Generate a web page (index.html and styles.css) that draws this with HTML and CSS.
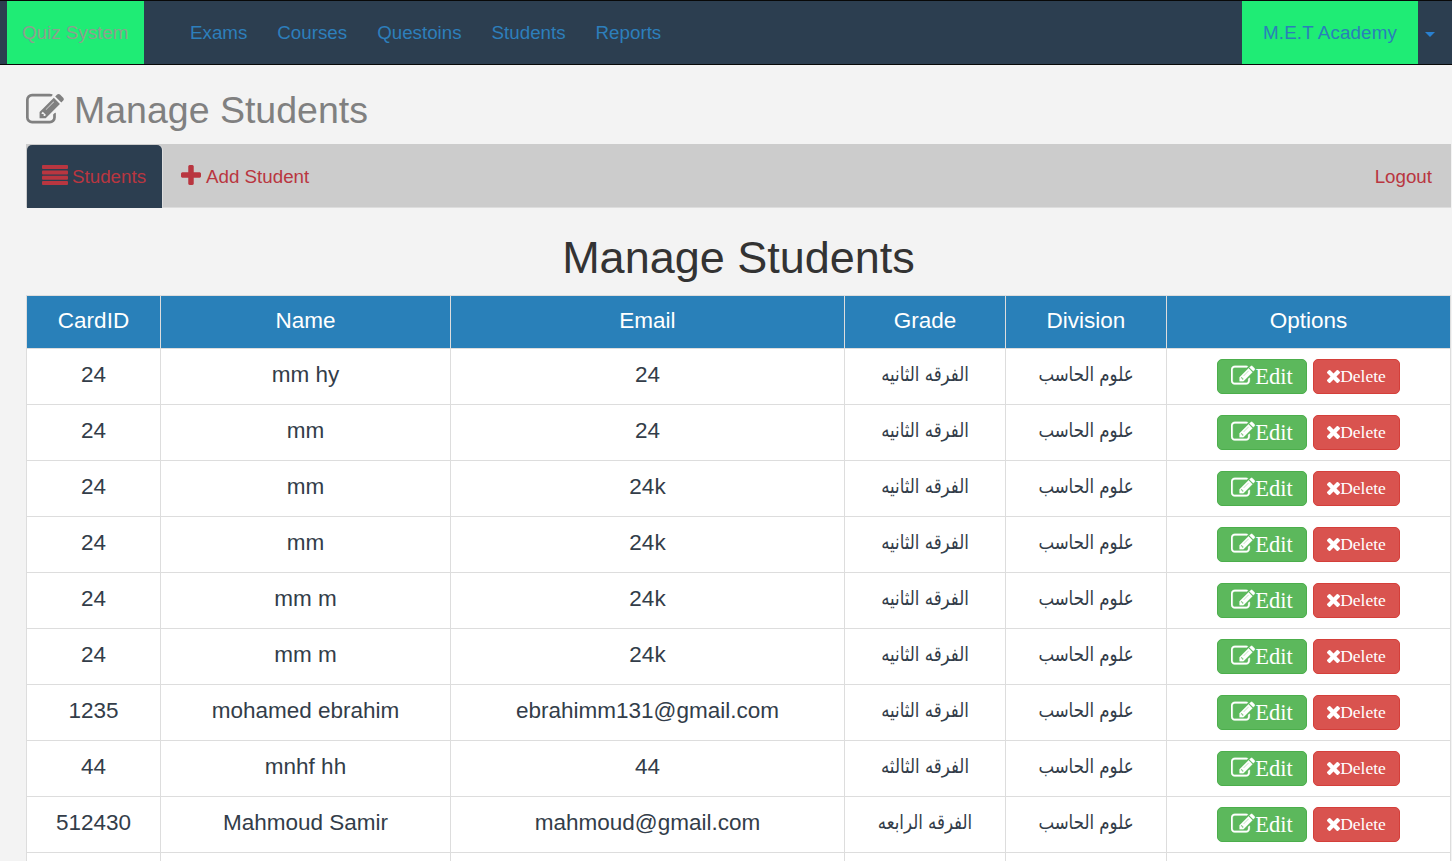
FILE: index.html
```html
<!DOCTYPE html>
<html lang="en">
<head>
<meta charset="utf-8">
<title>Manage Students</title>
<link rel="stylesheet" href="styles.css">
</head>
<body>
<svg class="defs" width="0" height="0">
  <symbol id="edit" viewBox="0 0 1792 1792"><path d="M888 1184l56-56-152-152-56 56v56h96v96h56zM1300 500l-370 370 20 20 370-370zM1408 1058v190q0 119-84.500 203.500t-203.500 84.500h-832q-119 0-203.500-84.500t-84.500-203.500v-832q0-119 84.500-203.500t203.500-84.500h832q63 0 117 25 15 7 18 23 3 17-9 29l-49 49q-14 14-32 8-23-6-45-6h-832q-66 0-113 47t-47 113v832q0 66 47 113t113 47h832q66 0 113-47t47-113v-126q0-13 9-22l64-64q15-15 35-7t20 29zm-96-738l288 288-672 672h-288v-288zm444 132l-92 92-288-288 92-92q28-28 68-28t68 28l152 152q28 28 28 68t-28 68z"/></symbol>
  <symbol id="times" viewBox="302 366 1188 1188"><path d="M1490 1322q0 40-28 68l-136 136q-28 28-68 28t-68-28l-294-294-294 294q-28 28-68 28t-68-28l-136-136q-28-28-28-68t28-68l294-294-294-294q-28-28-28-68t28-68l136-136q28-28 68-28t68 28l294 294 294-294q28-28 68-28t68 28l136 136q28 28 28 68t-28 68l-294 294 294 294q28 28 28 68z"/></symbol>
</svg>
<nav class="navbar">
  <a class="brand">Quiz System</a>
  <div class="links"><a>Exams</a><a>Courses</a><a>Questoins</a><a>Students</a><a>Reports</a></div>
  <a class="account">M.E.T Academy</a>
  <span class="caret"></span>
</nav>
<main class="page">
  <h1 class="page-title"><svg class="title-icon"><use href="#edit"/></svg>Manage Students</h1>
  <div class="tabs">
    <a class="tab active"><svg class="list-icon" viewBox="0 0 26 20"><rect width="26" height="4" rx=".9"/><rect y="5.400" width="26" height="4" rx=".9"/><rect y="10.700" width="26" height="4" rx=".9"/><rect y="16" width="26" height="4" rx=".9"/></svg>Students</a>
    <a class="tab add"><svg class="plus-icon" viewBox="192 128 1408 1408"><path d="M1600 736v192q0 40-28 68t-68 28h-416v416q0 40-28 68t-68 28h-192q-40 0-68-28t-28-68v-416h-416q-40 0-68-28t-28-68v-192q0-40 28-68t68-28h416v-416q0-40 28-68t68-28h192q40 0 68 28t28 68v416h416q40 0 68 28t28 68z"/></svg>Add Student</a>
    <a class="tab logout">Logout</a>
  </div>
  <h2 class="table-title">Manage Students</h2>
  <table class="students">
    <colgroup><col class="c-id"><col class="c-name"><col class="c-email"><col class="c-grade"><col class="c-div"><col class="c-opt"></colgroup>
    <thead><tr><th>CardID</th><th>Name</th><th>Email</th><th>Grade</th><th>Division</th><th>Options</th></tr></thead>
    <tbody id="rows"></tbody>
  </table>
</main>
<script src="rows.js"></script>
</body>
</html>
```
FILE: styles.css
```css
* { box-sizing: border-box; }
body { margin: 0; background: #f3f3f3; font-family: "Liberation Sans", Arial, sans-serif; font-size: 18.75px; color: #333; }
.defs { display: block; }
svg { fill: currentColor; flex: none; }
.navbar { display: flex; height: 65px; padding-left: 7px; background: #2c3e50; border-top: 1px solid #080808; border-bottom: 1px solid #080808; color: #2d7fbc; line-height: 63px; }
.brand { width: 137px; padding-left: 15px; background: #1fec75; color: #8c9f8f; }
.links { display: flex; gap: 30px; margin-left: 46px; }
.account { width: 176px; margin-left: auto; padding-left: 21px; background: #1fec75; color: #2980b9; white-space: nowrap; letter-spacing: .15px; }
.caret { align-self: center; margin: 4px 17px 0 7px; border: 5px solid transparent; border-top-color: #2980d0; border-bottom: 0; }
.page { padding: 0 1px 0 26px; }
.page-title { display: flex; align-items: center; gap: 10px; height: 79px; margin: 0; padding-top: 11px; font-size: 37.5px; font-weight: 400; color: #808080; }
.title-icon { width: 38px; height: 38px; }
.tabs { display: flex; height: 64px; padding: 1px 0 0 1px; background: #ccc; border-bottom: 1px solid #ddd; color: #b93640; }
.tab { display: flex; align-items: center; padding-top: 1px; }
.active { width: 135px; padding-left: 15px; background: #2c3e50; border-radius: 5px 5px 0 0; margin-bottom: -1px; box-shadow: 1px 0 #ddd; }
.list-icon { width: 26px; height: 20px; margin: -5px 4px 0 0; }
.add { padding-left: 19px; }
.plus-icon { width: 20px; height: 20px; margin: -3px 5px 0 0; }
.logout { margin-left: auto; padding-right: 19px; }
.table-title { height: 87px; margin: 0; padding-top: 25px; font-size: 45px; line-height: 50px; font-weight: 400; text-align: center; }
.students { width: 1424px; table-layout: fixed; border-collapse: collapse; background: #fff; font-size: 22.5px; text-align: center; color: #2c3e50; }
.students th, .students td { padding: 0; border: 1px solid #ddd; }
.students th { height: 53px; background: #2980b9; color: #fff; font-weight: 400; padding-bottom: 2px; }
.students td { height: 56px; padding-bottom: 4px; color: #333d49; }
.students td.options { padding-bottom: 0; }
.students .partial td { height: 8px; padding: 0; border-bottom: 0; }
.c-id { width: 134px; }
.c-name { width: 290px; }
.c-email { width: 394px; }
.c-grade, .c-div { width: 161px; }
.c-opt { width: 284px; }
.ar { display: block; margin-top: -2px; font-family: "DejaVu Sans", sans-serif; font-size: 20px; line-height: 24px; white-space: nowrap; transform: scaleX(.83); }
.actions { display: flex; justify-content: center; gap: 6px; font-family: "Liberation Serif", "Times New Roman", serif; color: #fff; }
.btn { display: flex; align-items: center; justify-content: center; height: 35px; border: 1px solid; border-radius: 5px; }
.btn span { color: #fff; }
.btn svg { fill: #fff; }
.edit { width: 90px; background: #5cb85c; border-color: #4cae4c; font-size: 22.5px; }
.edit svg { width: 24px; height: 24px; margin-top: -2px; stroke: #fff; stroke-width: 20; }
.delete { width: 87px; background: #d9534f; border-color: #d43f3a; font-size: 17.5px; }
.delete svg { width: 13px; height: 13px; }
```
FILE: rows.js
```js
const second = 'الفرقه الثانيه';
const third = 'الفرقه الثالثه';
const fourth = 'الفرقه الرابعه';
const division = 'علوم الحاسب';
const students = [
  ['24', 'mm hy', '24', second],
  ['24', 'mm', '24', second],
  ['24', 'mm', '24k', second],
  ['24', 'mm', '24k', second],
  ['24', 'mm m', '24k', second],
  ['24', 'mm m', '24k', second],
  ['1235', 'mohamed ebrahim', 'ebrahimm131@gmail.com', second],
  ['44', 'mnhf hh', '44', third],
  ['512430', 'Mahmoud Samir', 'mahmoud@gmail.com', fourth]
];
const actions = '<div class="actions"><a class="btn edit"><svg><use href="#edit"/></svg><span>Edit</span></a><a class="btn delete"><svg><use href="#times"/></svg><span>Delete</span></a></div>';
document.getElementById('rows').innerHTML = students.map(([id, name, email, grade]) =>
  `<tr><td>${id}</td><td>${name}</td><td>${email}</td><td><span class="ar" lang="ar" dir="rtl">${grade}</span></td><td><span class="ar" lang="ar" dir="rtl">${division}</span></td><td class="options">${actions}</td></tr>`
).join('') + '<tr class="partial"><td></td><td></td><td></td><td></td><td></td><td></td></tr>';
```
